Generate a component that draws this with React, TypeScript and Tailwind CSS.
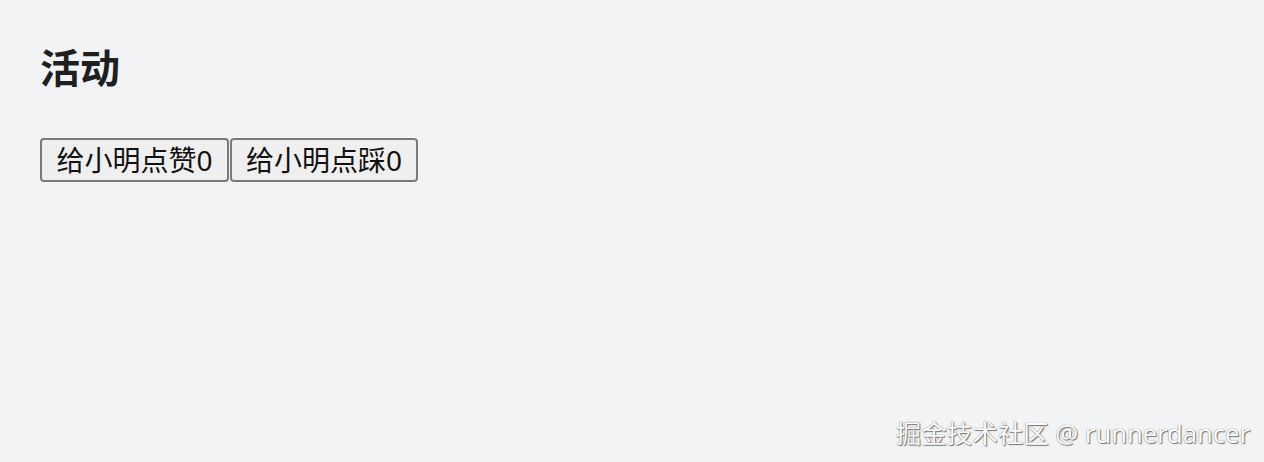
import { useState } from "react";

const cjk = "font-['Noto_Sans','Noto_Sans_CJK_SC',sans-serif]";

export default function App() {
  const [likes, setLikes] = useState(0);
  const [dislikes, setDislikes] = useState(0);

  return (
    <div className={`relative h-[462px] w-full overflow-hidden bg-[#f2f3f5] px-[40px] pt-[44px] ${cjk}`}>
      <h2 className="text-[40px] leading-[48px] font-bold text-[#1f1f1f]">活动</h2>
      <div className="mt-[46px] flex">
        <button
          onClick={() => setLikes(likes + 1)}
          className="h-[44px] w-[189px] rounded-[4px] border-2 border-[#7a7a7a] bg-[#efefef] text-[28px] leading-none text-[#111]"
        >
          给小明点赞{likes}
        </button>
        <button
          onClick={() => setDislikes(dislikes + 1)}
          className="ml-px h-[44px] w-[188px] rounded-[4px] border-2 border-[#7a7a7a] bg-[#efefef] text-[28px] leading-none text-[#111]"
        >
          给小明点踩{dislikes}
        </button>
      </div>
      <div className="absolute right-[14px] bottom-[16px] text-[25.5px] leading-none text-white [text-shadow:0_0_1px_#555,1px_1px_1px_#777]">
        掘金技术社区 @ runnerdancer
      </div>
    </div>
  );
}
